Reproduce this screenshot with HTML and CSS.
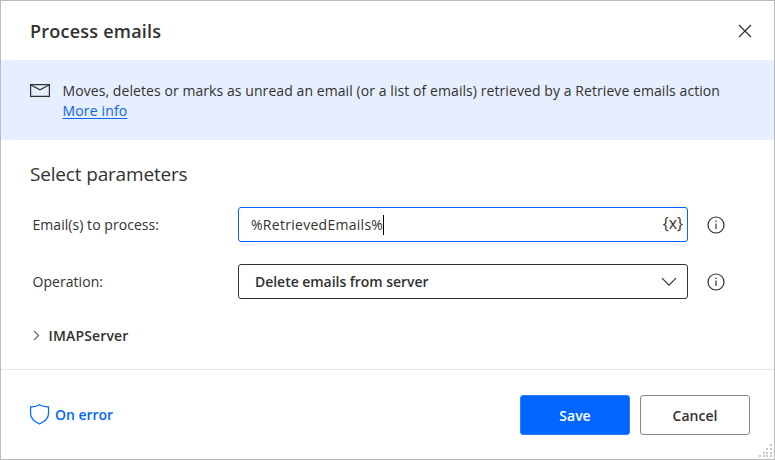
FILE: index.html
```html
<!DOCTYPE html>
<html lang="en">
<head>
<meta charset="utf-8">
<title>Process emails</title>
<link rel="stylesheet" href="styles.css">
</head>
<body>
<main class="dialog">
  <header class="header">
    <h1 class="title">Process emails</h1>
    <svg class="close" width="14" height="14" viewBox="0 0 14 14"><path d="M1 1l12 12M13 1L1 13"/></svg>
  </header>
  <section class="banner">
    <svg class="mail" width="20" height="13" viewBox="0 0 20 13"><path d="M.6.6h18.800v11.800H.6z"/><path d="M1 1l9 4.900L19 1"/></svg>
    <div class="banner-text">
      <p class="description">Moves, deletes or marks as unread an email (or a list of emails) retrieved by a Retrieve emails action</p>
      <a class="more">More info</a>
    </div>
  </section>
  <section class="parameters">
    <h2 class="heading">Select parameters</h2>
    <div class="row">
      <label class="label">Email(s) to process:</label>
      <div class="field focused">
        <span class="value">%RetrievedEmails%</span><i class="caret"></i>
        <span class="variable">{x}</span>
      </div>
      <svg class="info" width="18" height="18" viewBox="0 0 18 18"><circle cx="9" cy="9" r="8"/><path d="M9 7.500v5.500M9 4.500v1.400"/></svg>
    </div>
    <div class="row">
      <label class="label operation">Operation:</label>
      <div class="field select">
        <span class="option">Delete emails from server</span>
        <svg class="chevron" width="16" height="10" viewBox="0 0 16 10"><path d="M1 1.200l7 7 7-7"/></svg>
      </div>
      <svg class="info" width="18" height="18" viewBox="0 0 18 18"><circle cx="9" cy="9" r="8"/><path d="M9 7.500v5.500M9 4.500v1.400"/></svg>
    </div>
    <div class="group">
      <svg class="expand" width="7" height="11" viewBox="0 0 7 11"><path d="M1 1l4.600 4.500L1 10"/></svg>
      <span class="group-name">IMAPServer</span>
    </div>
  </section>
  <footer class="footer">
    <div class="on-error">
      <svg class="shield" width="20" height="21" viewBox="0 0 20 21"><path d="M9.500.8C12 2.500 15.500 3 18.500 2.800v6.700C18.500 14 15 17.500 9.500 20 4 17.500.6 14 .6 9.500V2.800C3.500 3 7 2.500 9.500.8z"/></svg>
      <span class="error-text">On error</span>
    </div>
    <button class="button primary">Save</button>
    <button class="button">Cancel</button>
  </footer>
  <svg class="grip" width="14" height="14" viewBox="0 0 14 14"><path d="M11 0h2v2h-2zM7 4h2v2H7zM11 4h2v2h-2zM4 8h2v2H4zM7 8h2v2H7zM11 8h2v2h-2zM0 11h2v2H0zM4 11h2v2H4zM7 11h2v2H7zM11 11h2v2h-2z"/></svg>
</main>
</body>
</html>
```
FILE: styles.css
```css
* { box-sizing: border-box; }
body { margin: 0; background: #fff; }
.dialog {
  position: relative;
  width: 775px;
  height: 460px;
  border: 1px solid #bbb;
  color: #323130;
  font: 14px/20px "Open Sans", "Noto Sans", sans-serif;
  white-space: nowrap;
}
svg { display: block; flex: none; fill: none; stroke: #323130; stroke-width: 1.2; }
h1, h2, p { margin: 0; }
.header { height: 59px; display: flex; align-items: center; justify-content: space-between; padding: 0 22px 0 29px; }
.title { font-size: 18px; font-weight: 600; line-height: 24px; letter-spacing: .23px; }
.banner { height: 80px; display: flex; background: #e5efff; padding: 21px 0 0 29px; }
.mail { margin: 3px 12.500px 0 0; }
.description { letter-spacing: .075px; }
.more { display: inline-block; color: #0f62eb; letter-spacing: .15px; text-decoration: underline; text-underline-offset: 2px; }
.heading { font-size: 19px; font-weight: 400; line-height: 26px; letter-spacing: -.17px; }
.parameters { height: 230px; padding: 21px 0 0 29px; border-bottom: 1px solid #e5e5e5; }
.row { display: flex; align-items: center; height: 35px; margin-bottom: 22px; }
.heading + .row { margin-top: 20px; }
.label { width: 208px; padding-left: 2.500px; letter-spacing: .05px; }
.operation { padding-top: 1px; }
.field { width: 450px; height: 35px; display: flex; align-items: center; border: 1px solid #323130; border-radius: 3px; padding: 0 10px 0 16px; }
.focused { border-color: #0066ff; padding: 0 4px 0 12px; }
.value { letter-spacing: .28px; }
.caret { width: 1px; height: 20px; background: #000; }
.variable { margin: -4px 0 0 auto; font-size: 16px; }
.info { margin-left: 19px; }
.chevron { margin-left: auto; }
.option, .group-name, .error-text, .button { font-weight: 600; }
.option { padding-top: 1px; letter-spacing: -.04px; }
.group { display: flex; align-items: center; height: 20px; margin-top: 26px; padding-left: 3px; }
.group-name { padding-top: 1px; letter-spacing: .15px; }
.expand { margin-right: 8.500px; stroke: #666; }
.footer { display: flex; align-items: center; height: 89px; padding: 0 24px 0 29px; }
.on-error { display: flex; align-items: center; margin-right: auto; color: #0066ff; }
.error-text { padding-top: 1px; letter-spacing: -.05px; }
.shield { margin-right: 5px; stroke: #0066ff; }
.button { width: 110px; height: 40px; margin-left: 10px; padding: 1px 0 0; border: 1px solid #8a8886; border-radius: 3px; background: #fff; color: #323130; font-family: inherit; font-size: 14px; }
.primary { background: #0066ff; border-color: #2b7fff; color: #fff; }
.grip { position: absolute; right: 1px; bottom: 1px; fill: #c4c8d8; stroke: none; }
```
